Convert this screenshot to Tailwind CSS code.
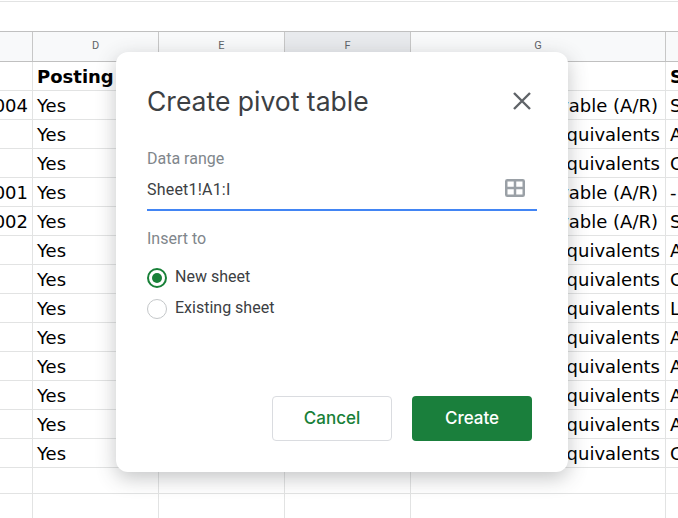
<!DOCTYPE html>
<html lang="en">
<head>
  <meta charset="UTF-8">
  <title>Create pivot table</title>
  <script src="https://cdn.jsdelivr.net/npm/@tailwindcss/browser@4"></script>
</head>
<body class="bg-white w-[678px] h-[518px] overflow-hidden relative font-['DejaVu_Sans',sans-serif] text-[18px] text-black">
  <div class="h-[31px] pt-px"><div class="border-t border-[#e2e3e3]"></div></div>

  <!-- column headers -->
  <div class="flex h-[31px] border-y border-[#c0c0c0] bg-[#f8f9fa] font-['Roboto',sans-serif] text-[11px] text-[#5f6368]">
    <div class="w-[33px] shrink-0 border-r border-[#c7c7c7]"></div>
    <div class="w-[126px] shrink-0 border-r border-[#c7c7c7] flex items-center justify-center">D</div>
    <div class="w-[126px] shrink-0 border-r border-[#c7c7c7] flex items-center justify-center">E</div>
    <div class="w-[126px] shrink-0 border-r border-[#c7c7c7] bg-[#e8eaed] flex items-center justify-center">F</div>
    <div class="w-[255px] shrink-0 border-r border-[#c7c7c7] flex items-center justify-center">G</div>
    <div class="flex-1"></div>
  </div>

  <!-- rows -->
  <div class="flex h-[29px] border-b border-[#e2e3e3]">
    <div class="w-[33px] shrink-0 border-r border-[#e2e3e3]"></div>
    <div class="w-[126px] shrink-0 border-r border-[#e2e3e3] pl-[4px] flex items-center font-bold whitespace-nowrap">Posting</div>
    <div class="w-[126px] shrink-0 border-r border-[#e2e3e3]"></div>
    <div class="w-[126px] shrink-0 border-r border-[#e2e3e3]"></div>
    <div class="w-[255px] shrink-0 border-r border-[#e2e3e3]"></div>
    <div class="flex-1 pl-[4px] flex items-center font-bold">S</div>
  </div>
  <div class="flex h-[29px] border-b border-[#e2e3e3]">
    <div class="w-[33px] shrink-0 border-r border-[#e2e3e3] pr-[4px] flex items-center justify-end overflow-hidden">004</div>
    <div class="w-[126px] shrink-0 border-r border-[#e2e3e3] pl-[4px] flex items-center">Yes</div>
    <div class="w-[126px] shrink-0 border-r border-[#e2e3e3]"></div>
    <div class="w-[126px] shrink-0 border-r border-[#e2e3e3]"></div>
    <div class="w-[255px] shrink-0 border-r border-[#e2e3e3] pr-[7px] flex items-center justify-end whitespace-nowrap">Receivable (A/R)</div>
    <div class="flex-1 pl-[4px] flex items-center">S</div>
  </div>
  <div class="flex h-[29px] border-b border-[#e2e3e3]">
    <div class="w-[33px] shrink-0 border-r border-[#e2e3e3]"></div>
    <div class="w-[126px] shrink-0 border-r border-[#e2e3e3] pl-[4px] flex items-center">Yes</div>
    <div class="w-[126px] shrink-0 border-r border-[#e2e3e3]"></div>
    <div class="w-[126px] shrink-0 border-r border-[#e2e3e3]"></div>
    <div class="w-[255px] shrink-0 border-r border-[#e2e3e3] pr-[5px] flex items-center justify-end whitespace-nowrap">Equivalents</div>
    <div class="flex-1 pl-[4px] flex items-center">A</div>
  </div>
  <div class="flex h-[29px] border-b border-[#e2e3e3]">
    <div class="w-[33px] shrink-0 border-r border-[#e2e3e3]"></div>
    <div class="w-[126px] shrink-0 border-r border-[#e2e3e3] pl-[4px] flex items-center">Yes</div>
    <div class="w-[126px] shrink-0 border-r border-[#e2e3e3]"></div>
    <div class="w-[126px] shrink-0 border-r border-[#e2e3e3]"></div>
    <div class="w-[255px] shrink-0 border-r border-[#e2e3e3] pr-[5px] flex items-center justify-end whitespace-nowrap">Equivalents</div>
    <div class="flex-1 pl-[4px] flex items-center">C</div>
  </div>
  <div class="flex h-[29px] border-b border-[#e2e3e3]">
    <div class="w-[33px] shrink-0 border-r border-[#e2e3e3] pr-[4px] flex items-center justify-end overflow-hidden">001</div>
    <div class="w-[126px] shrink-0 border-r border-[#e2e3e3] pl-[4px] flex items-center">Yes</div>
    <div class="w-[126px] shrink-0 border-r border-[#e2e3e3]"></div>
    <div class="w-[126px] shrink-0 border-r border-[#e2e3e3]"></div>
    <div class="w-[255px] shrink-0 border-r border-[#e2e3e3] pr-[7px] flex items-center justify-end whitespace-nowrap">Receivable (A/R)</div>
    <div class="flex-1 pl-[4px] flex items-center">-</div>
  </div>
  <div class="flex h-[29px] border-b border-[#e2e3e3]">
    <div class="w-[33px] shrink-0 border-r border-[#e2e3e3] pr-[4px] flex items-center justify-end overflow-hidden">002</div>
    <div class="w-[126px] shrink-0 border-r border-[#e2e3e3] pl-[4px] flex items-center">Yes</div>
    <div class="w-[126px] shrink-0 border-r border-[#e2e3e3]"></div>
    <div class="w-[126px] shrink-0 border-r border-[#e2e3e3]"></div>
    <div class="w-[255px] shrink-0 border-r border-[#e2e3e3] pr-[7px] flex items-center justify-end whitespace-nowrap">Receivable (A/R)</div>
    <div class="flex-1 pl-[4px] flex items-center">S</div>
  </div>
  <div class="flex h-[29px] border-b border-[#e2e3e3]">
    <div class="w-[33px] shrink-0 border-r border-[#e2e3e3]"></div>
    <div class="w-[126px] shrink-0 border-r border-[#e2e3e3] pl-[4px] flex items-center">Yes</div>
    <div class="w-[126px] shrink-0 border-r border-[#e2e3e3]"></div>
    <div class="w-[126px] shrink-0 border-r border-[#e2e3e3]"></div>
    <div class="w-[255px] shrink-0 border-r border-[#e2e3e3] pr-[5px] flex items-center justify-end whitespace-nowrap">Equivalents</div>
    <div class="flex-1 pl-[4px] flex items-center">A</div>
  </div>
  <div class="flex h-[29px] border-b border-[#e2e3e3]">
    <div class="w-[33px] shrink-0 border-r border-[#e2e3e3]"></div>
    <div class="w-[126px] shrink-0 border-r border-[#e2e3e3] pl-[4px] flex items-center">Yes</div>
    <div class="w-[126px] shrink-0 border-r border-[#e2e3e3]"></div>
    <div class="w-[126px] shrink-0 border-r border-[#e2e3e3]"></div>
    <div class="w-[255px] shrink-0 border-r border-[#e2e3e3] pr-[5px] flex items-center justify-end whitespace-nowrap">Equivalents</div>
    <div class="flex-1 pl-[4px] flex items-center">C</div>
  </div>
  <div class="flex h-[29px] border-b border-[#e2e3e3]">
    <div class="w-[33px] shrink-0 border-r border-[#e2e3e3]"></div>
    <div class="w-[126px] shrink-0 border-r border-[#e2e3e3] pl-[4px] flex items-center">Yes</div>
    <div class="w-[126px] shrink-0 border-r border-[#e2e3e3]"></div>
    <div class="w-[126px] shrink-0 border-r border-[#e2e3e3]"></div>
    <div class="w-[255px] shrink-0 border-r border-[#e2e3e3] pr-[5px] flex items-center justify-end whitespace-nowrap">Equivalents</div>
    <div class="flex-1 pl-[4px] flex items-center">L</div>
  </div>
  <div class="flex h-[29px] border-b border-[#e2e3e3]">
    <div class="w-[33px] shrink-0 border-r border-[#e2e3e3]"></div>
    <div class="w-[126px] shrink-0 border-r border-[#e2e3e3] pl-[4px] flex items-center">Yes</div>
    <div class="w-[126px] shrink-0 border-r border-[#e2e3e3]"></div>
    <div class="w-[126px] shrink-0 border-r border-[#e2e3e3]"></div>
    <div class="w-[255px] shrink-0 border-r border-[#e2e3e3] pr-[5px] flex items-center justify-end whitespace-nowrap">Equivalents</div>
    <div class="flex-1 pl-[4px] flex items-center">A</div>
  </div>
  <div class="flex h-[29px] border-b border-[#e2e3e3]">
    <div class="w-[33px] shrink-0 border-r border-[#e2e3e3]"></div>
    <div class="w-[126px] shrink-0 border-r border-[#e2e3e3] pl-[4px] flex items-center">Yes</div>
    <div class="w-[126px] shrink-0 border-r border-[#e2e3e3]"></div>
    <div class="w-[126px] shrink-0 border-r border-[#e2e3e3]"></div>
    <div class="w-[255px] shrink-0 border-r border-[#e2e3e3] pr-[5px] flex items-center justify-end whitespace-nowrap">Equivalents</div>
    <div class="flex-1 pl-[4px] flex items-center">A</div>
  </div>
  <div class="flex h-[29px] border-b border-[#e2e3e3]">
    <div class="w-[33px] shrink-0 border-r border-[#e2e3e3]"></div>
    <div class="w-[126px] shrink-0 border-r border-[#e2e3e3] pl-[4px] flex items-center">Yes</div>
    <div class="w-[126px] shrink-0 border-r border-[#e2e3e3]"></div>
    <div class="w-[126px] shrink-0 border-r border-[#e2e3e3]"></div>
    <div class="w-[255px] shrink-0 border-r border-[#e2e3e3] pr-[5px] flex items-center justify-end whitespace-nowrap">Equivalents</div>
    <div class="flex-1 pl-[4px] flex items-center">A</div>
  </div>
  <div class="flex h-[29px] border-b border-[#e2e3e3]">
    <div class="w-[33px] shrink-0 border-r border-[#e2e3e3]"></div>
    <div class="w-[126px] shrink-0 border-r border-[#e2e3e3] pl-[4px] flex items-center">Yes</div>
    <div class="w-[126px] shrink-0 border-r border-[#e2e3e3]"></div>
    <div class="w-[126px] shrink-0 border-r border-[#e2e3e3]"></div>
    <div class="w-[255px] shrink-0 border-r border-[#e2e3e3] pr-[5px] flex items-center justify-end whitespace-nowrap">Equivalents</div>
    <div class="flex-1 pl-[4px] flex items-center">A</div>
  </div>
  <div class="flex h-[29px] border-b border-[#e2e3e3]">
    <div class="w-[33px] shrink-0 border-r border-[#e2e3e3]"></div>
    <div class="w-[126px] shrink-0 border-r border-[#e2e3e3] pl-[4px] flex items-center">Yes</div>
    <div class="w-[126px] shrink-0 border-r border-[#e2e3e3]"></div>
    <div class="w-[126px] shrink-0 border-r border-[#e2e3e3]"></div>
    <div class="w-[255px] shrink-0 border-r border-[#e2e3e3] pr-[5px] flex items-center justify-end whitespace-nowrap">Equivalents</div>
    <div class="flex-1 pl-[4px] flex items-center">C</div>
  </div>
  <div class="flex h-[26px] border-b border-[#e2e3e3]">
    <div class="w-[33px] shrink-0 border-r border-[#e2e3e3]"></div>
    <div class="w-[126px] shrink-0 border-r border-[#e2e3e3]"></div>
    <div class="w-[126px] shrink-0 border-r border-[#e2e3e3]"></div>
    <div class="w-[126px] shrink-0 border-r border-[#e2e3e3]"></div>
    <div class="w-[255px] shrink-0 border-r border-[#e2e3e3]"></div>
  </div>
  <div class="flex h-[26px]">
    <div class="w-[33px] shrink-0 border-r border-[#e2e3e3]"></div>
    <div class="w-[126px] shrink-0 border-r border-[#e2e3e3]"></div>
    <div class="w-[126px] shrink-0 border-r border-[#e2e3e3]"></div>
    <div class="w-[126px] shrink-0 border-r border-[#e2e3e3]"></div>
    <div class="w-[255px] shrink-0 border-r border-[#e2e3e3]"></div>
  </div>

  <!-- dialog -->
  <div class="absolute left-[116px] top-[52px] w-[452px] h-[420px] bg-white rounded-[12px] shadow-[0_6px_20px_rgba(60,64,67,0.3)] flex flex-col pl-[31px] pr-[31px] font-['Roboto',sans-serif]">
    <div class="flex items-center justify-between h-[34px] mt-[32px]">
      <h2 class="pt-[2px] font-['Inter',sans-serif] text-[26.5px] text-[#3c4043] whitespace-nowrap">Create pivot table</h2>
      <svg class="w-[18px] h-[18px] mr-[6px]" viewBox="0 0 18 18" fill="none" stroke="#5f6368" stroke-width="2.4">
        <path d="M1 1L17 17M17 1L1 17"/>
      </svg>
    </div>
    <div class="mt-[31px] text-[16px] leading-[20px] text-[#80868b]">Data range</div>
    <div class="mt-[10px] h-[32px] flex items-start justify-between border-b-2 border-[#4285f4] w-[390px] text-[16px] tracking-[0.2px] leading-[22px] text-[#3c4043]">
      <span>Sheet1!A1:I</span>
      <svg class="w-[20px] h-[18px] mr-[12px]" viewBox="0 0 20 18" fill="none" stroke="#9aa0a6" stroke-width="2.5">
        <rect x="1.25" y="1.25" width="17.5" height="15.5" rx="1"/>
        <path d="M1 9H19M10 1V17"/>
      </svg>
    </div>
    <div class="mt-[18px] text-[16px] leading-[20px] text-[#80868b]">Insert to</div>
    <div class="mt-[18px] flex items-center gap-[8px] h-[22px] text-[16px] text-[#3c4043]">
      <span class="w-[20px] h-[20px] rounded-full border-2 border-[#188038] flex items-center justify-center">
        <span class="w-[10px] h-[10px] rounded-full bg-[#188038]"></span>
      </span>
      <span class="mb-[2px]">New sheet</span>
    </div>
    <div class="mt-[9px] flex items-center gap-[8px] h-[22px] text-[16px] text-[#3c4043]">
      <span class="w-[20px] h-[20px] rounded-full border border-[#c4c7c9]"></span>
      <span class="mb-[2px]">Existing sheet</span>
    </div>
    <div class="mt-auto mb-[31px] mr-[5px] flex justify-end gap-[20px] font-['Inter',sans-serif] text-[17px] font-medium">
      <button class="w-[120px] h-[45px] pt-px rounded-[4px] border border-[#dadce0] bg-white text-[#188038]">Cancel</button>
      <button class="w-[120px] h-[45px] pt-px rounded-[4px] bg-[#1a7f3c] text-white">Create</button>
    </div>
  </div>
</body>
</html>
